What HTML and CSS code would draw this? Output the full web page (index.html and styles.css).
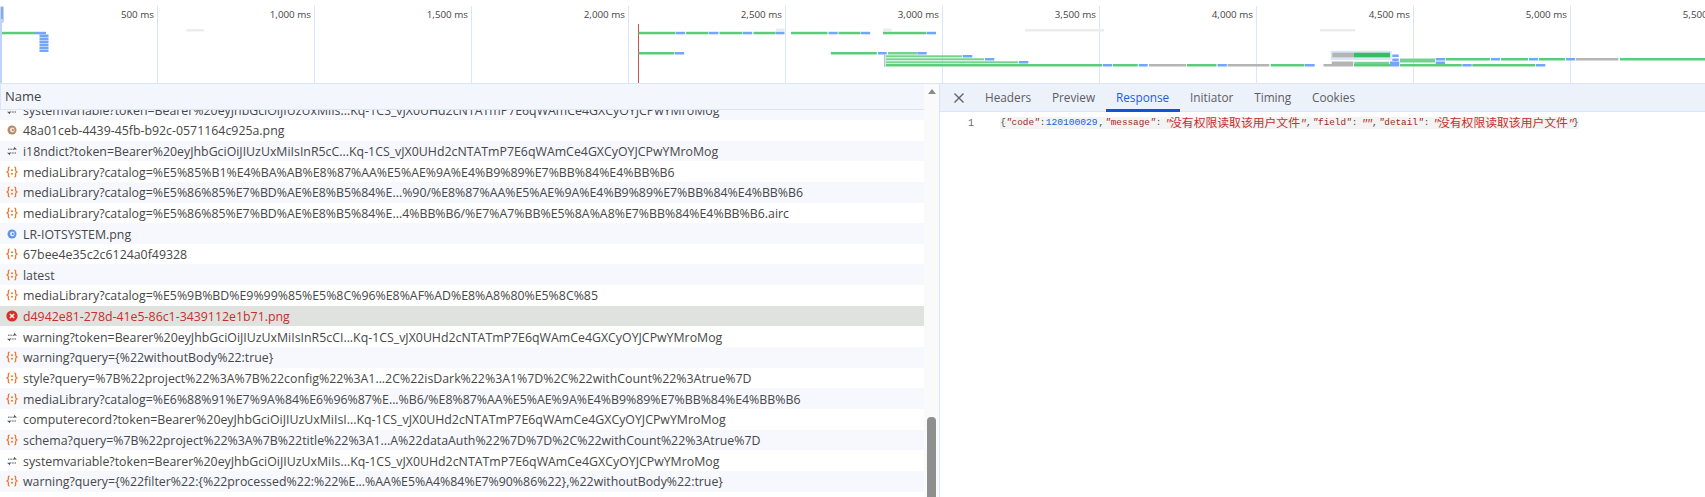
FILE: index.html
```html
<!DOCTYPE html>
<html lang="en">
<head>
<meta charset="utf-8">
<title>Network</title>
<link rel="stylesheet" href="styles.css">
</head>
<body>
<svg class="defs" width="0" height="0" aria-hidden="true">
  <symbol id="i-fetch" viewBox="0 0 12 12">
    <path class="o" d="M3.600 1.200C2 1.200 2.400 2.600 2.400 4S1.900 5.600 1 6c.9.4 1.400.6 1.400 2s-.4 2.800 1.200 2.800M8.400 1.200c1.600 0 1.200 1.400 1.200 2.800s.5 1.600 1.400 2c-.9.4-1.400.6-1.400 2s.4 2.800-1.200 2.800"/>
    <circle class="of" cx="6" cy="4.300" r="1"/><circle class="of" cx="6" cy="7.700" r="1"/>
  </symbol>
  <symbol id="i-ws" viewBox="0 0 12 12">
    <path class="a" d="M2 4.200h6.500M10 8h-6.500"/>
    <path class="af" d="M8 1.800l3 2.600H8zM4 10.200 1 7.800h3z"/>
  </symbol>
  <symbol id="i-img" viewBox="0 0 12 12">
    <circle cx="6" cy="6" r="4.500" fill="#b58a68"/><circle cx="6.300" cy="6" r="2.400" fill="#f1e4d8"/><circle cx="6.800" cy="6" r="1" fill="#a9785a"/>
  </symbol>
  <symbol id="i-blue" viewBox="0 0 12 12">
    <circle cx="6" cy="6" r="4.500" fill="#5b93ee"/><circle cx="6.300" cy="6" r="2.400" fill="#dbe8fc"/><circle cx="6.800" cy="6" r="1" fill="#4a84e6"/>
  </symbol>
  <symbol id="i-err" viewBox="0 0 12 12">
    <circle cx="6" cy="6" r="5.600" fill="#d93025"/><path d="M3.900 3.900l4.200 4.200M8.100 3.900 3.900 8.100" stroke="#fff" stroke-width="1.400" fill="none"/>
  </symbol>
</svg>

<section class="overview">
  <div class="ticks">
    <div class="tick">500 ms</div>
    <div class="tick">1,000 ms</div>
    <div class="tick">1,500 ms</div>
    <div class="tick">2,000 ms</div>
    <div class="tick">2,500 ms</div>
    <div class="tick">3,000 ms</div>
    <div class="tick">3,500 ms</div>
    <div class="tick">4,000 ms</div>
    <div class="tick">4,500 ms</div>
    <div class="tick">5,000 ms</div>
    <div class="tick">5,500 ms</div>
  </div>
  <svg class="bars" width="1705" height="83" viewBox="0 0 1705 83" aria-hidden="true">
    <rect class="h" x="0" y="6" width="4" height="17" rx="2"/>
    <rect class="h" x="0" y="22" width="2" height="61"/>
    <rect x="1.500" y="7" width="1" height="12" fill="#5b83c8"/>
    <rect class="r" x="638" y="24" width="1" height="59"/>
    <rect class="t" x="884" y="55" width="1.500" height="12"/>
    <g class="lg">
      <rect x="186.500" y="29" width="17.500" height="2.500"/>
      <rect x="776" y="28.500" width="8.500" height="3"/>
      <rect x="883" y="28.500" width="8.500" height="3"/>
      <rect x="1025" y="29" width="79" height="2.500"/>
      <rect x="1320" y="29" width="35" height="2.500"/>
    </g>
    <g class="g">
      <rect x="2" y="31.800" width="33" height="2.500"/>
      <rect x="638.500" y="31.800" width="37" height="2.500"/>
      <rect x="686" y="31.800" width="22.500" height="2.500"/>
      <rect x="719.500" y="31.800" width="23" height="2.500"/>
      <rect x="753.500" y="31.800" width="22" height="2.500"/>
      <rect x="791" y="31.800" width="36.500" height="2.500"/>
      <rect x="838.500" y="31.800" width="22" height="2.500"/>
      <rect x="883" y="31.800" width="43.500" height="2.500"/>
      <rect x="638.500" y="52" width="35.500" height="2.500"/>
      <rect x="830.800" y="52" width="46" height="2.500"/>
      <rect x="886" y="64" width="216" height="2.500"/>
      <rect x="1113" y="64" width="24.700" height="2.500"/>
      <rect x="1187" y="64" width="29.500" height="2.500"/>
      <rect x="1270.700" y="64" width="33.800" height="2.500"/>
      <rect x="1354" y="64" width="36" height="2.500"/>
      <rect x="1400" y="64" width="61.700" height="2.500"/>
      <rect x="1472.300" y="64" width="63" height="2.500"/>
      <rect x="1445.700" y="58" width="44.300" height="2.500"/>
      <rect x="1501" y="58" width="27" height="2.500"/>
      <rect x="1539" y="58" width="26" height="2.500"/>
      <rect x="1620" y="58" width="85" height="2.500"/>
    </g>
    <g class="lt">
      <rect x="888" y="52" width="29" height="2.500"/>
      <rect x="886" y="55.300" width="76" height="2"/>
      <rect x="886" y="58.300" width="98" height="2"/>
      <rect x="886" y="61.300" width="132.300" height="2"/>
      <rect x="1354.300" y="61.800" width="35" height="2.200"/>
      <rect x="1400" y="58.500" width="35" height="4"/>
    </g>
    <g class="b">
      <rect x="35" y="31.800" width="11" height="2.500"/>
      <rect x="39.500" y="34.500" width="9" height="2.500"/>
      <rect x="39.500" y="37.500" width="9" height="2.500"/>
      <rect x="39.500" y="40.500" width="9" height="2.500"/>
      <rect x="39.500" y="43.500" width="9" height="2.500"/>
      <rect x="39.500" y="46.500" width="9" height="2.500"/>
      <rect x="39.500" y="49.500" width="9" height="2.500"/>
      <rect x="676" y="31.800" width="9" height="2.500"/>
      <rect x="709" y="31.800" width="9.500" height="2.500"/>
      <rect x="743" y="31.800" width="9.300" height="2.500"/>
      <rect x="775.700" y="31.800" width="8.800" height="2.500"/>
      <rect x="828.500" y="31.800" width="9.200" height="2.500"/>
      <rect x="861" y="31.800" width="9.200" height="2.500"/>
      <rect x="927" y="31.800" width="9" height="2.500"/>
      <rect x="674.600" y="52" width="9.600" height="2.500"/>
      <rect x="878" y="52" width="8.700" height="2.500"/>
      <rect x="917.300" y="52" width="9.400" height="2.500"/>
      <rect x="962.700" y="55" width="9.600" height="2.500"/>
      <rect x="985" y="58" width="9.300" height="2.500"/>
      <rect x="1019" y="61" width="9.300" height="2.500"/>
      <rect x="1102.700" y="64" width="9.600" height="2.500"/>
      <rect x="1138.700" y="64" width="9" height="2.500"/>
      <rect x="1217.600" y="64" width="9.200" height="2.500"/>
      <rect x="1305" y="64" width="9.700" height="2.500"/>
      <rect x="1392.300" y="54.500" width="6.400" height="2.500"/>
      <rect x="1392.300" y="58.500" width="6.400" height="2.500"/>
      <rect x="1390" y="61.500" width="9.300" height="2.500"/>
      <rect x="1390" y="64" width="9.300" height="2.500"/>
      <rect x="1435.700" y="58" width="9.300" height="2.500"/>
      <rect x="1435.700" y="61.500" width="9.300" height="2.500"/>
      <rect x="1462.300" y="64" width="9.400" height="2.500"/>
      <rect x="1536" y="64" width="9.300" height="2.500"/>
      <rect x="1491" y="58" width="9" height="2.500"/>
      <rect x="1529" y="58" width="9" height="2.500"/>
      <rect x="1566" y="58" width="9" height="2.500"/>
    </g>
    <g class="k">
      <rect x="1149" y="64" width="37.300" height="2.500"/>
      <rect x="1227.500" y="64" width="41.800" height="2.500"/>
      <rect x="1323.500" y="64" width="29.800" height="2.500"/>
      <rect x="1331.700" y="61.500" width="21.600" height="2.500"/>
      <rect x="1575.800" y="58" width="42.500" height="2.500"/>
    </g>
    <rect class="sel" x="1330.700" y="50.700" width="61" height="9.300" rx="1"/>
    <rect class="k" x="1332.300" y="52.700" width="21.700" height="4.600"/>
    <rect class="dg" x="1354" y="52.700" width="36" height="4.600"/>
  </svg>
</section>

<main class="split">
  <section class="left">
    <div class="names">
      <header class="name-head">Name</header>
      <div class="rows">
        <div class="row first"><svg class="ic"><use href="#i-ws"/></svg><span>systemvariable?token=Bearer%20eyJhbGciOiJIUzUxMiIs...Kq-1CS_vJX0UHd2cNTATmP7E6qWAmCe4GXCyOYJCPwYMroMog</span></div>
        <div class="row"><svg class="ic"><use href="#i-img"/></svg><span>48a01ceb-4439-45fb-b92c-0571164c925a.png</span></div>
        <div class="row"><svg class="ic"><use href="#i-ws"/></svg><span>i18ndict?token=Bearer%20eyJhbGciOiJIUzUxMiIsInR5cC...Kq-1CS_vJX0UHd2cNTATmP7E6qWAmCe4GXCyOYJCPwYMroMog</span></div>
        <div class="row"><svg class="ic"><use href="#i-fetch"/></svg><span>mediaLibrary?catalog=%E5%85%B1%E4%BA%AB%E8%87%AA%E5%AE%9A%E4%B9%89%E7%BB%84%E4%BB%B6</span></div>
        <div class="row"><svg class="ic"><use href="#i-fetch"/></svg><span>mediaLibrary?catalog=%E5%86%85%E7%BD%AE%E8%B5%84%E...%90/%E8%87%AA%E5%AE%9A%E4%B9%89%E7%BB%84%E4%BB%B6</span></div>
        <div class="row"><svg class="ic"><use href="#i-fetch"/></svg><span>mediaLibrary?catalog=%E5%86%85%E7%BD%AE%E8%B5%84%E...4%BB%B6/%E7%A7%BB%E5%8A%A8%E7%BB%84%E4%BB%B6.airc</span></div>
        <div class="row"><svg class="ic"><use href="#i-blue"/></svg><span>LR-IOTSYSTEM.png</span></div>
        <div class="row"><svg class="ic"><use href="#i-fetch"/></svg><span>67bee4e35c2c6124a0f49328</span></div>
        <div class="row"><svg class="ic"><use href="#i-fetch"/></svg><span>latest</span></div>
        <div class="row"><svg class="ic"><use href="#i-fetch"/></svg><span>mediaLibrary?catalog=%E5%9B%BD%E9%99%85%E5%8C%96%E8%AF%AD%E8%A8%80%E5%8C%85</span></div>
        <div class="row error"><svg class="ic"><use href="#i-err"/></svg><span>d4942e81-278d-41e5-86c1-3439112e1b71.png</span></div>
        <div class="row"><svg class="ic"><use href="#i-ws"/></svg><span>warning?token=Bearer%20eyJhbGciOiJIUzUxMiIsInR5cCI...Kq-1CS_vJX0UHd2cNTATmP7E6qWAmCe4GXCyOYJCPwYMroMog</span></div>
        <div class="row"><svg class="ic"><use href="#i-fetch"/></svg><span>warning?query={%22withoutBody%22:true}</span></div>
        <div class="row"><svg class="ic"><use href="#i-fetch"/></svg><span>style?query=%7B%22project%22%3A%7B%22config%22%3A1...2C%22isDark%22%3A1%7D%2C%22withCount%22%3Atrue%7D</span></div>
        <div class="row"><svg class="ic"><use href="#i-fetch"/></svg><span>mediaLibrary?catalog=%E6%88%91%E7%9A%84%E6%96%87%E...%B6/%E8%87%AA%E5%AE%9A%E4%B9%89%E7%BB%84%E4%BB%B6</span></div>
        <div class="row"><svg class="ic"><use href="#i-ws"/></svg><span>computerecord?token=Bearer%20eyJhbGciOiJIUzUxMiIsI...Kq-1CS_vJX0UHd2cNTATmP7E6qWAmCe4GXCyOYJCPwYMroMog</span></div>
        <div class="row"><svg class="ic"><use href="#i-fetch"/></svg><span>schema?query=%7B%22project%22%3A%7B%22title%22%3A1...A%22dataAuth%22%7D%7D%2C%22withCount%22%3Atrue%7D</span></div>
        <div class="row"><svg class="ic"><use href="#i-ws"/></svg><span>systemvariable?token=Bearer%20eyJhbGciOiJIUzUxMiIs...Kq-1CS_vJX0UHd2cNTATmP7E6qWAmCe4GXCyOYJCPwYMroMog</span></div>
        <div class="row"><svg class="ic"><use href="#i-fetch"/></svg><span>warning?query={%22filter%22:{%22processed%22:%22%E...%AA%E5%A4%84%E7%90%86%22},%22withoutBody%22:true}</span></div>
      </div>
    </div>
    <div class="scrollbar">
      <div class="arrow"></div>
      <div class="thumb"></div>
    </div>
  </section>
  <section class="right">
    <nav class="tabs">
      <svg class="close" width="12" height="12" viewBox="0 0 12 12" aria-hidden="true"><path d="M1.500 1.500l9 9M10.500 1.500l-9 9"/></svg>
      <span class="tab">Headers</span>
      <span class="tab">Preview</span>
      <span class="tab active">Response</span>
      <span class="tab">Initiator</span>
      <span class="tab">Timing</span>
      <span class="tab">Cookies</span>
    </nav>
    <div class="code">
      <span class="ln">1</span>
      <code class="line"><span class="p">{</span><span class="key"><i>"</i>code<i>"</i></span><span class="p">:</span><span class="num">120100029</span><span class="p comma">,</span><span class="key"><i>"</i>message<i>"</i></span><span class="p">:</span><span class="str"><i class="q">"</i>没有权限读取该用户文件<i class="q">"</i></span><span class="p comma">,</span><span class="key"><i>"</i>field<i>"</i></span><span class="p">:</span><span class="str"><i class="q">"</i><i class="q">"</i></span><span class="p comma">,</span><span class="key"><i>"</i>detail<i>"</i></span><span class="p">:</span><span class="str"><i class="q">"</i>没有权限读取该用户文件<i class="q">"</i></span><span class="p">}</span></code>
    </div>
  </section>
</main>
</body>
</html>
```

FILE: styles.css
```css
* { box-sizing: border-box; }
html, body { margin: 0; height: 100%; overflow: hidden; background: #fff; }
body {
  display: flex;
  flex-direction: column;
  font-family: "Open Sans", "Noto Sans", "Noto Sans CJK SC", sans-serif;
  color: #474747;
}
.defs { position: absolute; }
.o { fill: none; stroke: #f0782e; stroke-width: 1.300; }
.of { fill: #f0782e; }
.a { fill: none; stroke: #4f5358; stroke-width: 1; stroke-dasharray: 1.500 .8; }
.af { fill: #4f5358; }

/* overview */
.overview {
  position: relative;
  flex: 0 0 84px;
  overflow: hidden;
  border-bottom: 1px solid #d9e5fb;
}
.ticks {
  display: grid;
  grid-template-columns: repeat(11, 157px);
  height: 83px;
  padding-top: 6px;
  margin-left: 0.5px;
}
.tick {
  border-right: 1px solid #d9e5fb;
  text-align: right;
  padding: 2px 2.500px 0 0;
  font-size: 9.800px;
  line-height: 14px;
  color: #454545;
}
.bars { position: absolute; left: 0; top: 0; }
.h { fill: #bdd3f8; }
.r { fill: #c9524d; }
.t { fill: #a9cfc0; }
.g rect { fill: #5ccb7c; }
.lt rect { fill: #74d28f; }
.b rect { fill: #72a6f6; }
.k, .k rect { fill: #b4b4b4; }
.lg rect { fill: #ececec; }
.sel { fill: #d9e5fb; }
.dg { fill: #38bd60; }

/* split */
.split { flex: 1; display: flex; min-height: 0; }
.left { flex: 0 0 940px; display: flex; border-right: 1px solid #d9e5fb; }
.names { flex: 0 0 924px; display: flex; flex-direction: column; min-width: 0; }
.name-head {
  flex: 0 0 26px;
  background: #f3f6fd;
  border-left: 1px solid #d9e5fb;
  border-bottom: 1px solid #d9e5fb;
  padding-left: 4px;
  font-size: 13px;
  line-height: 25px;
  color: #444;
}
.rows { flex: 1; overflow: hidden; min-height: 0; }
.row {
  display: flex;
  align-items: center;
  height: 20.650px;
  padding: 1px 0 0 6px;
  font-size: 12.350px;
  white-space: nowrap;
}
.row:nth-child(odd) { background: #f6f8fe; }
.row.first { margin-top: -10.650px; }
.row.error { background: #e0e2e0; color: #c5302a; }
.ic { flex: 0 0 12px; width: 12px; height: 12px; margin: -1px 5px 0 0; }

.scrollbar {
  flex: 0 0 15px;
  display: flex;
  flex-direction: column;
  align-items: center;
  background: #fafafa;
}
.arrow {
  margin-top: 5px;
  border-left: 4.500px solid transparent;
  border-right: 4.500px solid transparent;
  border-bottom: 5px solid #8a8a8a;
}
.thumb {
  margin-top: auto;
  width: 9px;
  height: 80px;
  border-radius: 4px 4px 0 0;
  background: #8f8f8f;
}

/* right panel */
.right { flex: 1; min-width: 0; display: flex; flex-direction: column; }
.tabs {
  flex: 0 0 26px;
  display: flex;
  align-items: stretch;
  background: #edf1fa;
  border-bottom: 1px solid #d9e5fb;
  padding-left: 13px;
  font-size: 11.800px;
}
.close { align-self: center; margin-right: 9.600px; }
.close path { fill: none; stroke: #5f6368; stroke-width: 1.400; }
.tab {
  padding: 1px 10.400px 0;
  line-height: 24px;
  color: #5a5e63;
  border-bottom: 2px solid transparent;
  margin-bottom: -1px;
}
.tab.active { color: #1a62d6; border-bottom: 3px solid #0b57d0; }
.code { display: flex; align-items: center; height: 22px; }
.ln {
  flex: 0 0 34px;
  text-align: right;
  font-family: "Liberation Mono", monospace;
  font-size: 10px;
  color: #6b6b6b;
}
.line {
  margin-left: 26px;
  background: #f3f3f3;
  line-height: 12px;
  height: 12px;
  display: flex;
  align-items: center;
  white-space: nowrap;
  font-family: "Liberation Mono", "Noto Sans CJK SC", monospace;
  font-size: 9.330px;
}
.key { color: #9c2a22; }
.str {
  margin-left: 3.500px;
  color: #c5302a;
  font-family: "Noto Sans CJK SC", sans-serif;
  font-size: 11.820px;
}
.q {
  display: inline-block;
  width: 5px;
  font-family: "Liberation Mono", monospace;
  font-size: 11px;
  text-align: center;
}
.num { color: #1a62d6; font-size: 9.630px; }
.p { display: inline-block; width: 6px; text-align: center; color: #444; }
.p.comma { width: 7.500px; }
```
